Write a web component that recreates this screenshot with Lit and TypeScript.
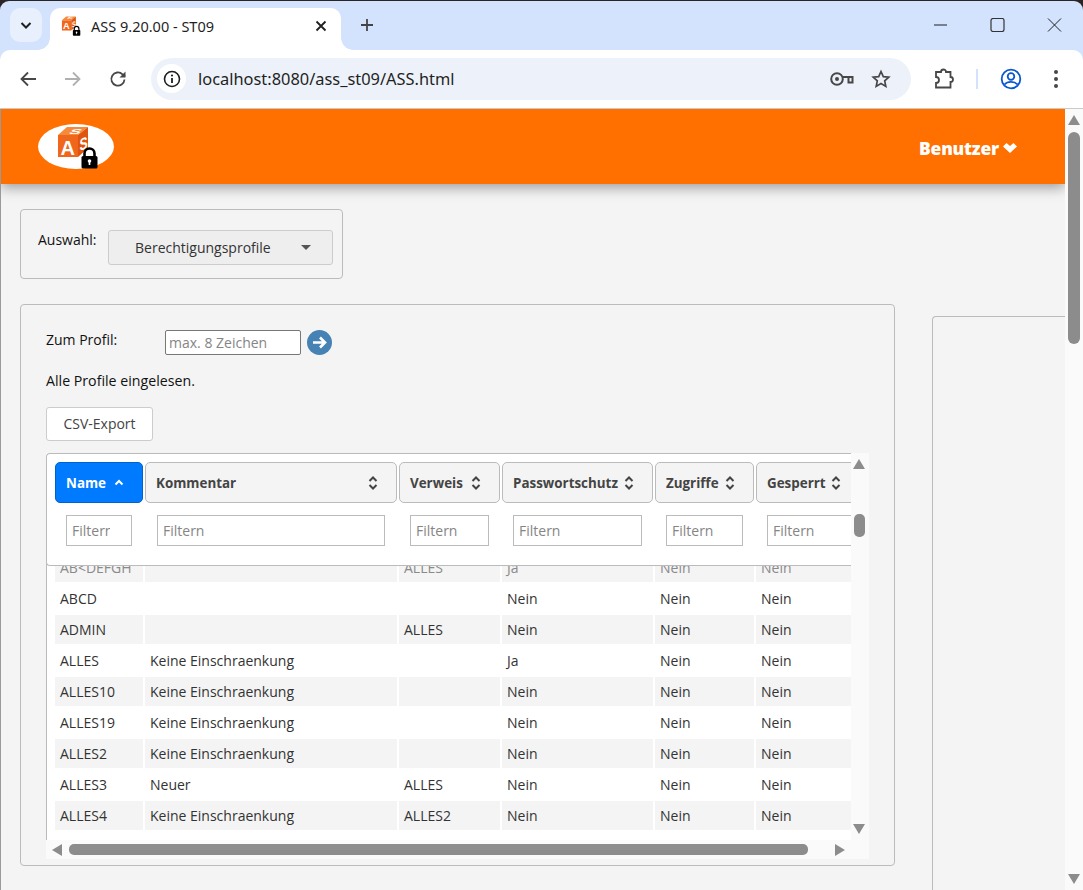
import { LitElement, html, css, svg } from "lit";
import { customElement } from "lit/decorators.js";

const cube = svg`
  <polygon points="20,11 40,11 40,33 20,33" fill="#f0661a"/>
  <polygon points="20,11 29,3 50,3 40,11" fill="#f58a3c"/>
  <polygon points="40,11 50,3 50,24 40,33" fill="#e0540e"/>
  <text x="22.500" y="31" font-family="Liberation Sans, sans-serif" font-weight="700" font-size="20" fill="#fff">A</text>
  <text x="0" y="0" transform="translate(41.500,27) skewY(-20) scale(.72,1)" font-family="Liberation Sans, sans-serif" font-weight="700" font-size="17" fill="#fff">S</text>
  <text x="0" y="0" transform="translate(30,9.500) skewX(-40) scale(1.300,.55)" font-family="Liberation Sans, sans-serif" font-weight="700" font-size="13" fill="#fff">S</text>
`;
const lock = svg`
  <path d="M46.500 33v-3.500a5 5 0 0 1 10 0V33" fill="none" stroke="#000" stroke-width="2.600"/>
  <rect x="43.500" y="32" width="16" height="12.500" rx="1.500" fill="#000"/>
  <circle cx="51.500" cy="37" r="1.800" fill="#fff"/>
  <rect x="50.700" y="37" width="1.600" height="4" fill="#fff"/>
`;

const sortIcon = html`<svg class="sort" width="10" height="16" viewBox="0 0 10 16"><path d="M1.500 6 5 2.500 8.500 6M1.500 10 5 13.500 8.500 10" fill="none" stroke="#444" stroke-width="2"/></svg>`;

const columns = ["Name", "Kommentar", "Verweis", "Passwortschutz", "Zugriffe", "Gesperrt"];

const rows: string[][] = [
  ["AB<DEFGH", "", "ALLES", "Ja", "Nein", "Nein"],
  ["ABCD", "", "", "Nein", "Nein", "Nein"],
  ["ADMIN", "", "ALLES", "Nein", "Nein", "Nein"],
  ["ALLES", "Keine Einschraenkung", "", "Ja", "Nein", "Nein"],
  ["ALLES10", "Keine Einschraenkung", "", "Nein", "Nein", "Nein"],
  ["ALLES19", "Keine Einschraenkung", "", "Nein", "Nein", "Nein"],
  ["ALLES2", "Keine Einschraenkung", "", "Nein", "Nein", "Nein"],
  ["ALLES3", "Neuer", "ALLES", "Nein", "Nein", "Nein"],
  ["ALLES4", "Keine Einschraenkung", "ALLES2", "Nein", "Nein", "Nein"],
];

@customElement("app-root")
export class AppRoot extends LitElement {
  static styles = css`
    :host { display: block; height: 890px; overflow: hidden; background: #2b2424; font-family: "Open Sans", "Noto Sans", sans-serif; color: #111; }
    * { box-sizing: border-box; }
    .window { margin-top: 1px; height: 889px; border-radius: 9px 9px 0 0; overflow: hidden; background: #d3e3fd; display: flex; flex-direction: column; }

    .tabstrip { height: 49px; flex: none; display: flex; align-items: flex-start; padding: 7px 0 0 10px; }
    .tabsearch { width: 32px; height: 34px; border-radius: 10px; background: #e9f0fd; display: flex; align-items: center; justify-content: center; }
    .tab { position: relative; margin-left: 8px; width: 291px; height: 42px; background: #fff; border-radius: 10px 10px 0 0; display: flex; align-items: center; padding: 0 14px 7px 11px; font-family: "Noto Sans", sans-serif; font-size: 14.500px; color: #1f1f1f; }
    .tab::before, .tab::after { content: ""; position: absolute; bottom: 0; width: 12px; height: 12px; }
    .tab::before { left: -12px; background: radial-gradient(circle at 0 0, transparent 11.500px, #fff 12px); }
    .tab::after { right: -12px; background: radial-gradient(circle at 100% 0, transparent 11.500px, #fff 12px); }
    .tabtitle { flex: 1; margin-left: 10px; white-space: nowrap; }
    .plus { margin: 10px 0 0 19px; }
    .winctl { margin-left: auto; display: flex; padding: 10px 21px 0 0; gap: 42px; }

    .toolbar { height: 59px; flex: none; background: #fff; border-radius: 10px 10px 0 0; border-bottom: 1px solid #c9c9c9; display: flex; align-items: center; padding: 0 0 1px 18px; }
    .navs { display: flex; gap: 25px; }
    .omni { margin-left: 23px; width: 760px; height: 42px; border-radius: 21px; background: #edf2fa; display: flex; align-items: center; padding: 0 20px 0 6px; }
    .info { width: 29px; height: 29px; border-radius: 50%; background: #fff; display: flex; align-items: center; justify-content: center; flex: none; }
    .url { margin-left: 12px; flex: 1; font-family: "Noto Sans", sans-serif; font-size: 16.400px; color: #1f1f1f; white-space: nowrap; }
    .star { margin-left: 17px; }
    .puzzle { margin-left: 22px; }
    .divider { width: 2px; height: 20px; background: #d3e3fd; margin-left: 21px; }
    .profile { margin-left: 22px; }
    .kebab { margin-left: 31px; }

    .page { flex: 1; min-height: 0; display: flex; background: #f4f4f4; border-left: 1px solid #9a9a9a; }
    .main { flex: 1; min-width: 0; display: flex; flex-direction: column; overflow: hidden; }
    .appbar { height: 75px; flex: none; background: #ff7000; box-shadow: 0 4px 12px rgba(0,0,0,.35); display: flex; align-items: center; justify-content: space-between; padding: 0 48px 0 37px; position: relative; }
    .user { display: flex; align-items: center; gap: 4px; color: #fff; font-weight: 800; font-size: 17.400px; letter-spacing: -.2px; padding-top: 2px; }

    .content { flex: 1; min-height: 0; display: flex; gap: 37px; padding: 25px 0 0 19px; }
    .left { width: 875px; flex: none; display: flex; flex-direction: column; gap: 25px; }
    .panel { border: 1px solid #bbb; border-radius: 4px; }
    .choose { width: 323px; height: 70px; display: flex; align-items: flex-start; justify-content: space-between; padding: 20px 9px 0 17px; font-size: 14px; }
    .choose label { line-height: 20px; white-space: nowrap; }
    .select { width: 225px; height: 35px; background: #eee; border: 1px solid #ccc; border-radius: 3px; display: flex; align-items: center; justify-content: space-between; padding: 0 21px 0 26px; font-size: 14px; color: #333; }
    .caret { width: 0; height: 0; border: 5px solid transparent; border-top: 5px solid #555; border-bottom: 0; }

    .profiles { height: 562px; padding: 25px 25px 0 25px; font-size: 14px; }
    .goto { display: flex; align-items: flex-start; height: 25px; }
    .goto label { width: 119px; line-height: 20px; }
    .goto input { width: 136px; height: 25px; border: 1px solid #777; border-radius: 2px; padding: 0 3px; font: 14px "Open Sans", sans-serif; background: #fff; outline: 0; }
    .goto input::placeholder, .filter::placeholder { color: #858585; opacity: 1; }
    .arrowbtn { margin-left: 6px; width: 25px; height: 25px; border-radius: 50%; background: #4682b4; display: flex; align-items: center; justify-content: center; }
    .msg { margin-top: 16px; line-height: 20px; font-size: 14.200px; }
    .csvrow { height: 34px; margin-top: 16px; }
    .csv { display: inline-block; width: 107px; height: 34px; line-height: 32px; text-align: center; background: #fff; border: 1px solid #ccc; border-radius: 3px; font-size: 14px; color: #444; }

    .tablebox { margin-top: 12px; width: 823px; height: 406px; display: grid; grid-template-columns: 805px 18px; grid-template-rows: 387px 19px; background: #fafafa; }
    .viewport { overflow: hidden; background: #fff; display: flex; flex-direction: column; }
    .thead { position: relative; z-index: 1; flex: none; height: 113px; background: #fff; border: 1px solid #bbb; border-right: 0; border-radius: 4px 0 0 4px; padding: 8px 0 0 8px; display: grid; grid-template-columns: 88px 252px 101px 151px 99px 104px; column-gap: 2px; align-content: start; }
    .th { height: 41px; background: #f4f4f4; border: 1px solid #bbb; border-radius: 5px; display: flex; align-items: center; justify-content: space-between; padding: 0 18px 0 10px; font-weight: 700; font-size: 13.400px; color: #444; white-space: nowrap; }
    .th.active { background: #007bff; border-color: #0062cc; color: #fff; }
    .fcell { margin-top: 12px; padding: 0 11px; grid-row: 2; }
    .fcell.wide { padding: 0 12px; }
    .fcell.last { padding: 0 0 0 11px; }
    .filter { width: 100%; height: 31px; border: 1px solid #bbb; background: #fff; padding: 0 5px; font: 14px "Open Sans", sans-serif; outline: 0; display: block; }
    .filter.narrow { padding-right: 21px; }
    .tbody { flex: 1; margin-top: -13px; border-left: 1px solid #bbb; padding-left: 8px; display: flex; flex-direction: column; gap: 2px; overflow: hidden; }
    .tr { flex: none; display: grid; grid-template-columns: 88px 252px 101px 151px 99px 100px; column-gap: 2px; height: 29px; }
    .td { padding: 0 5px; line-height: 29px; font-size: 14px; color: #333; white-space: nowrap; }
    .tr.odd .td { background: #f4f4f4; }
    .tr.faded .td { color: #8a8a8a; }

    .vbar { display: flex; flex-direction: column; align-items: center; padding-right: 2px; }
    .vbar .up { margin-top: 6px; }
    .vbar .thumb { margin-top: 45px; width: 11px; height: 23px; border-radius: 5px; background: #8c8c8c; }
    .vbar .down { margin-top: auto; margin-bottom: 6px; }
    .hbar { grid-column: 1 / 3; display: flex; align-items: center; padding: 0 24px 0 6px; }
    .hbar .thumb { margin-left: 7px; width: 739px; height: 11px; border-radius: 5px; background: #8c8c8c; }
    .hbar .right { margin-left: auto; }

    .tri { width: 0; height: 0; border: 0 solid transparent; flex: none; }
    .up { border-width: 0 6.500px 10px; border-bottom-color: #8c8c8c; }
    .down { border-width: 10px 6.500px 0; border-top-color: #8c8c8c; }
    .left-t { border-width: 6.500px 10px 6.500px 0; border-right-color: #8c8c8c; }
    .right { border-width: 6.500px 0 6.500px 10px; border-left-color: #8c8c8c; }

    .side { flex: 1; margin-top: 107px; border: 1px solid #bbb; border-right: 0; border-bottom: 0; border-radius: 4px 0 0 0; }

    .pagebar { width: 18px; flex: none; background: #fafafa; display: flex; flex-direction: column; align-items: center; }
    .pagebar .up { margin-top: 6px; }
    .pagebar .thumb { margin-top: 7px; width: 12px; height: 212px; border-radius: 6px; background: #8c8c8c; }
    .pagebar .down { margin-top: auto; margin-bottom: 6px; }
    svg { display: block; flex: none; }
  `;

  render() {
    return html`
      <div class="window">
        <div class="tabstrip">
          <div class="tabsearch">
            <svg width="14" height="14" viewBox="0 0 14 14"><path d="M2.500 5 7 9.500 11.500 5" fill="none" stroke="#1f1f1f" stroke-width="2"/></svg>
          </div>
          <div class="tab">
            <svg width="20" height="20" viewBox="19 2 41 43">${cube}${lock}</svg>
            <span class="tabtitle">ASS 9.20.00 - ST09</span>
            <svg width="12" height="12" viewBox="0 0 12 12"><path d="M1.500 1.500l9 9M10.500 1.500l-9 9" stroke="#1f1f1f" stroke-width="1.800"/></svg>
          </div>
          <svg class="plus" width="14" height="14" viewBox="0 0 14 14"><path d="M7 1v12M1 7h12" stroke="#444" stroke-width="1.800"/></svg>
          <div class="winctl">
            <svg width="15" height="14" viewBox="0 0 15 14"><path d="M1 7h13" stroke="#1f1f1f" stroke-width="1"/></svg>
            <svg width="15" height="14" viewBox="0 0 15 14"><rect x="1" y=".5" width="13" height="13" rx="2" fill="none" stroke="#333" stroke-width="1.200"/></svg>
            <svg width="15" height="14" viewBox="0 0 15 14"><path d="M1 .5l13 13M14 .5l-13 13" stroke="#1f1f1f" stroke-width="1"/></svg>
          </div>
        </div>

        <div class="toolbar">
          <div class="navs">
            <svg width="20" height="20" viewBox="0 0 20 20"><path d="M18 10H4M10 3.500 3.500 10l6.500 6.500" fill="none" stroke="#474747" stroke-width="1.800"/></svg>
            <svg width="20" height="20" viewBox="0 0 20 20"><path d="M2 10h14M10 3.500l6.500 6.500-6.500 6.500" fill="none" stroke="#b0b0b0" stroke-width="1.800"/></svg>
            <svg width="20" height="20" viewBox="0 0 20 20"><path d="M16.500 10.500a6.600 6.600 0 1 1-2-5.200L17 7.500" fill="none" stroke="#474747" stroke-width="1.800"/><path d="M17.500 2.500v6h-6z" fill="#474747"/></svg>
          </div>
          <div class="omni">
            <div class="info">
              <svg width="18" height="18" viewBox="0 0 18 18"><circle cx="9" cy="9" r="7.500" fill="none" stroke="#1f1f1f" stroke-width="1.600"/><path d="M9 8v5" stroke="#1f1f1f" stroke-width="1.800"/><circle cx="9" cy="5.500" r="1.100" fill="#1f1f1f"/></svg>
            </div>
            <span class="url">localhost:8080/ass_st09/ASS.html</span>
            <svg width="24" height="16" viewBox="0 0 24 16"><circle cx="7" cy="8" r="5.800" fill="none" stroke="#474747" stroke-width="2"/><circle cx="7" cy="8" r="2" fill="#474747"/><path d="M12.500 6H22.500V11.500H18.500V7" fill="none" stroke="#474747" stroke-width="2"/></svg>
            <svg class="star" width="20" height="20" viewBox="0 0 20 20"><path d="M10 2.500l2.300 5.100 5.500.6-4.100 3.700 1.100 5.500L10 14.600l-4.800 2.800 1.100-5.500-4.100-3.700 5.500-.6z" fill="none" stroke="#474747" stroke-width="1.700"/></svg>
          </div>
          <svg class="puzzle" width="22" height="22" viewBox="0 0 22 22"><path d="M3 4h5a2.500 2.500 0 0 1 5 0h4.500v5a2.500 2.500 0 0 1 0 5V19.500H3v-4.500a2.800 2.800 0 0 0 0-6z" fill="none" stroke="#474747" stroke-width="1.800"/></svg>
          <div class="divider"></div>
          <svg class="profile" width="22" height="22" viewBox="0 0 22 22"><circle cx="11" cy="11" r="9.300" fill="none" stroke="#0b57d0" stroke-width="1.800"/><circle cx="11" cy="8.500" r="3.300" fill="none" stroke="#0b57d0" stroke-width="1.800"/><path d="M4.500 16.500c3-3.500 10-3.500 13 0" fill="none" stroke="#0b57d0" stroke-width="1.800"/></svg>
          <svg class="kebab" width="6" height="20" viewBox="0 0 6 20"><circle cx="3" cy="3" r="2" fill="#474747"/><circle cx="3" cy="10" r="2" fill="#474747"/><circle cx="3" cy="17" r="2" fill="#474747"/></svg>
        </div>

        <div class="page">
          <div class="main">
            <header class="appbar">
              <svg width="76" height="46" viewBox="0 0 76 46"><ellipse cx="38" cy="22.500" rx="38" ry="22.500" fill="#fff"/>${cube}${lock}</svg>
              <div class="user">Benutzer
                <svg width="14" height="10" viewBox="0 0 14 10"><path d="M3.500 0 7 3 10.500 0 14 3.500 7 10 0 3.500z" fill="#fff"/></svg>
              </div>
            </header>
            <div class="content">
              <div class="left">
                <section class="panel choose">
                  <label>Auswahl:</label>
                  <div class="select"><span>Berechtigungsprofile</span><span class="caret"></span></div>
                </section>
                <section class="panel profiles">
                  <div class="goto">
                    <label>Zum Profil:</label>
                    <input placeholder="max. 8 Zeichen" />
                    <div class="arrowbtn">
                      <svg width="15" height="13" viewBox="0 0 15 13"><path d="M1 6.500h11M8 1.500l5 5-5 5" fill="none" stroke="#fff" stroke-width="2.600"/></svg>
                    </div>
                  </div>
                  <div class="msg">Alle Profile eingelesen.</div>
                  <div class="csvrow"><span class="csv">CSV-Export</span></div>
                  <div class="tablebox">
                    <div class="viewport">
                      <div class="thead">
                        ${columns.map((c, i) => html`
                          <div class="th ${i === 0 ? "active" : ""}">
                            <span>${c}</span>
                            ${i === 0
                              ? html`<svg width="10" height="16" viewBox="0 0 10 16"><path d="M1.500 9.500 5 6 8.500 9.500" fill="none" stroke="#fff" stroke-width="2"/></svg>`
                              : sortIcon}
                          </div>`)}
                        ${columns.map((_, i) => html`
                          <div class="fcell ${i === 1 ? "wide" : ""} ${i === 5 ? "last" : ""}">
                            <input class="filter ${i === 0 ? "narrow" : ""}" placeholder="Filtern" />
                          </div>`)}
                      </div>
                      <div class="tbody">
                        ${rows.map((r, i) => html`
                          <div class="tr ${i % 2 === 0 ? "odd" : ""} ${i === 0 ? "faded" : ""}">
                            ${r.map((c) => html`<div class="td">${c}</div>`)}
                          </div>`)}
                      </div>
                    </div>
                    <div class="vbar">
                      <div class="tri up"></div>
                      <div class="thumb"></div>
                      <div class="tri down"></div>
                    </div>
                    <div class="hbar">
                      <div class="tri left-t"></div>
                      <div class="thumb"></div>
                      <div class="tri right"></div>
                    </div>
                  </div>
                </section>
              </div>
              <aside class="side"></aside>
            </div>
          </div>
          <div class="pagebar">
            <div class="tri up"></div>
            <div class="thumb"></div>
            <div class="tri down"></div>
          </div>
        </div>
      </div>
    `;
  }
}
